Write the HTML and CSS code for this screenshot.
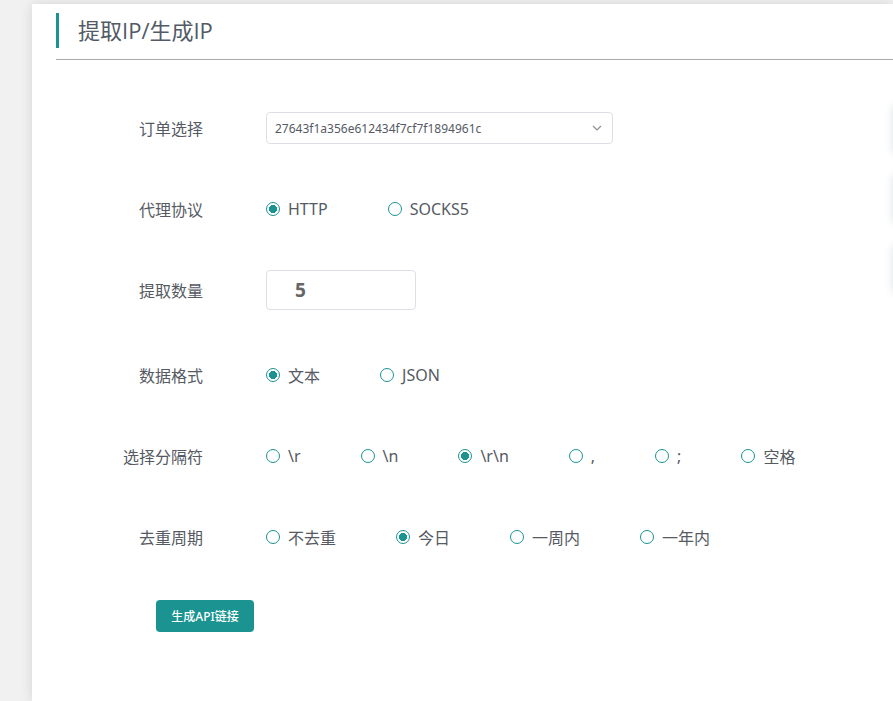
FILE: index.html
```html
<!DOCTYPE html>
<html lang="zh">
<head>
<meta charset="utf-8">
<title>提取IP/生成IP</title>
<link rel="stylesheet" href="styles.css">
</head>
<body>
<div class="card">
  <div class="heading">
    <h1 class="heading-title">提取IP/生成IP</h1>
  </div>
  <form class="form">
    <div class="row">
      <label class="label">订单选择</label>
      <div class="control">
        <div class="select">
          <span class="select-text">27643f1a356e612434f7cf7f1894961c</span>
          <svg class="chevron" width="10" height="6" viewBox="0 0 10 6"><path d="M1 1l4 4 4-4" fill="none" stroke="#8a8f99" stroke-width="1.2"/></svg>
        </div>
      </div>
    </div>
    <div class="row">
      <label class="label">代理协议</label>
      <div class="control">
        <span class="opt"><span class="radio checked"></span>HTTP</span>
        <span class="opt"><span class="radio"></span>SOCKS5</span>
      </div>
    </div>
    <div class="row">
      <label class="label">提取数量</label>
      <div class="control">
        <div class="num">5</div>
      </div>
    </div>
    <div class="row row-shift">
      <label class="label">数据格式</label>
      <div class="control">
        <span class="opt"><span class="radio checked"></span>文本</span>
        <span class="opt"><span class="radio"></span>JSON</span>
      </div>
    </div>
    <div class="row">
      <label class="label">选择分隔符</label>
      <div class="control">
        <span class="opt"><span class="radio"></span>\r</span>
        <span class="opt"><span class="radio"></span>\n</span>
        <span class="opt"><span class="radio checked"></span>\r\n</span>
        <span class="opt"><span class="radio"></span>,</span>
        <span class="opt"><span class="radio"></span>;</span>
        <span class="opt"><span class="radio"></span>空格</span>
      </div>
    </div>
    <div class="row">
      <label class="label">去重周期</label>
      <div class="control">
        <span class="opt"><span class="radio"></span>不去重</span>
        <span class="opt"><span class="radio checked"></span>今日</span>
        <span class="opt"><span class="radio"></span>一周内</span>
        <span class="opt"><span class="radio"></span>一年内</span>
      </div>
    </div>
    <div class="actions">
      <button type="button" class="btn">生成API链接</button>
    </div>
  </form>
</div>
<div class="side">
  <div class="side-item"></div>
  <div class="side-item"></div>
  <div class="side-item"></div>
</div>
</body>
</html>
```
FILE: styles.css
```css
html, body {
  margin: 0;
  padding: 0;
}
body {
  background: #f1f1f1;
  font-family: "Noto Sans", "Noto Sans CJK SC", sans-serif;
  color: #555a63;
  overflow: hidden;
  height: 701px;
}
.card {
  margin: 4px 0 0 32px;
  background: #fff;
  height: 697px;
  box-shadow: 0 0 12px rgba(0, 0, 0, 0.12);
  padding: 9px 0 0 24px;
  box-sizing: border-box;
}
.heading {
  border-bottom: 1px solid #a9a9a9;
  padding-bottom: 11px;
}
.heading-title {
  margin: 0;
  border-left: 3px solid #1a9391;
  padding-left: 19px;
  height: 35px;
  line-height: 35px;
  font-family: "Open Sans", "Noto Sans CJK SC", sans-serif;
  font-size: 22px;
  font-weight: 400;
  color: #525a66;
}
.form {
  padding-top: 48px;
  display: flex;
  flex-direction: column;
  gap: 41px;
}
.row {
  display: flex;
  align-items: center;
  height: 40px;
}
.row-shift {
  margin-top: 4px;
}
.label {
  width: 147px;
  text-align: right;
  font-size: 16px;
  color: #555a63;
  flex-shrink: 0;
}
.control {
  margin-left: 63px;
  display: flex;
  align-items: center;
}
.select {
  width: 327px;
  height: 30px;
  border: 1px solid #dcdfe6;
  border-radius: 4px;
  display: flex;
  align-items: center;
  justify-content: space-between;
  padding: 0 10px 0 8px;
}
.select-text {
  font-size: 12px;
  color: #555a63;
}
.chevron {
  display: block;
}
.opt {
  display: inline-flex;
  align-items: center;
  font-size: 16px;
  margin-right: 60px;
  color: #555a63;
}
.radio {
  width: 12px;
  height: 12px;
  border: 1px solid #1a9391;
  border-radius: 50%;
  margin-right: 8px;
  flex-shrink: 0;
}
.radio.checked {
  background: radial-gradient(circle, #1a9391 0 3.8px, #fff 4.3px);
}
.num {
  width: 120px;
  height: 38px;
  border: 1px solid #dcdfe6;
  border-radius: 4px;
  padding-left: 28px;
  display: flex;
  align-items: center;
  font-size: 19px;
  font-weight: 700;
  color: #666;
}
.actions {
  padding-left: 100px;
  margin-top: 2px;
}
.btn {
  width: 98px;
  height: 32px;
  border: none;
  border-radius: 4px;
  background: #1a9391;
  color: #fff;
  font-family: "Noto Sans", "Noto Sans CJK SC", sans-serif;
  font-size: 12px;
  font-weight: 500;
  padding: 0;
}
.side {
  position: fixed;
  right: -50px;
  top: 105px;
  display: flex;
  flex-direction: column;
  gap: 22px;
}
.side-item {
  width: 50px;
  height: 48px;
  background: #fff;
  border-radius: 4px;
  box-shadow: 0 0 8px rgba(40, 60, 90, 0.16);
}
```
